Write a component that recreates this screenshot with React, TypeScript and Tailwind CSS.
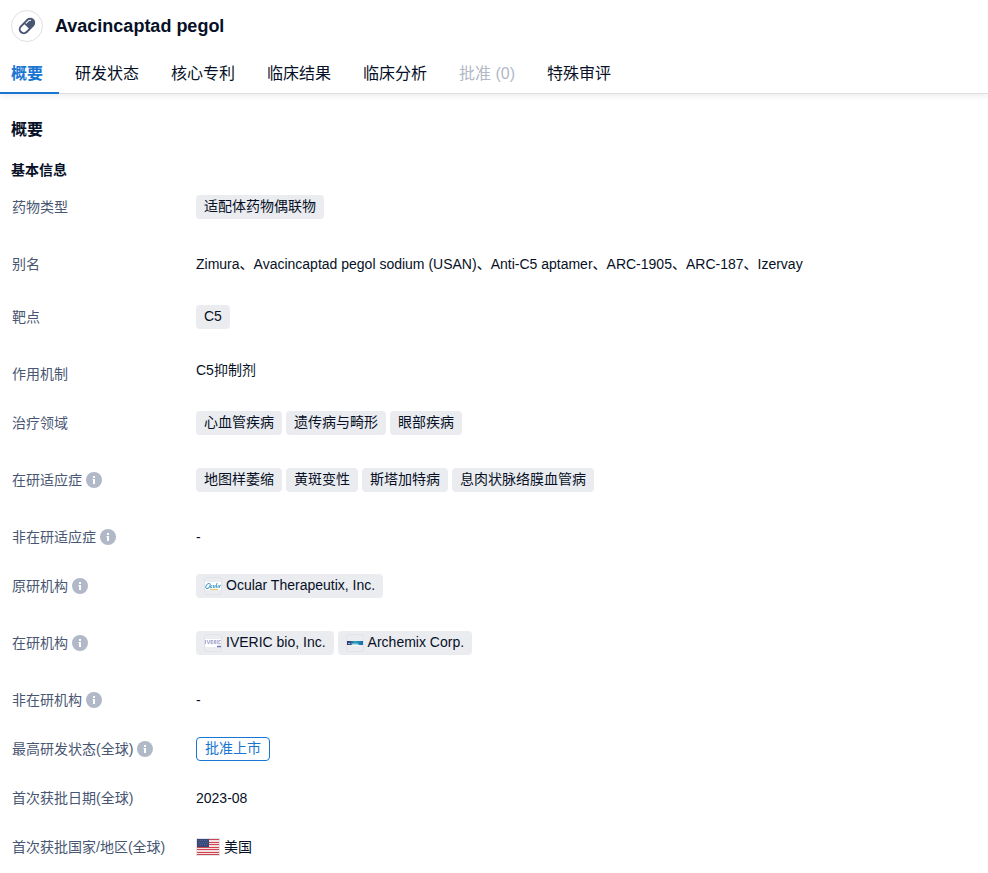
import type { ReactNode } from "react";

const tabs = [
  { label: "概要", state: "active" },
  { label: "研发状态" },
  { label: "核心专利" },
  { label: "临床结果" },
  { label: "临床分析" },
  { label: "批准 (0)", state: "disabled" },
  { label: "特殊审评" },
];

function PillIcon() {
  return (
    <svg viewBox="0 0 20 20" className="size-5" aria-hidden="true">
      <g transform="rotate(-45 10 10)">
        <rect x="0.500" y="5" width="19" height="10" rx="5" fill="#485672" />
        <path d="M9.500 6.900H5.500a3.100 3.100 0 0 0 0 6.200h4z" fill="#fff" />
        <path d="M11.500 7.400h3.200a2 2 0 0 1 1.800 1.100" fill="none" stroke="#fff" strokeWidth="1.100" strokeLinecap="round" />
      </g>
    </svg>
  );
}

function InfoIcon() {
  return (
    <svg viewBox="0 0 16 16" className="size-4 shrink-0" role="img" aria-label="说明">
      <circle cx="8" cy="8" r="8" fill="#b1b8c7" />
      <rect x="7" y="4" width="2" height="2" fill="#fff" />
      <path d="M6.500 7H9v5H7V8h-.5z" fill="#fff" />
    </svg>
  );
}

function OcularLogo() {
  return (
    <svg viewBox="0 0 16 16" className="size-4">
      <rect y="4" width="16" height="8" fill="#fff" />
      <g fill="none" stroke="#4a9cc8" strokeWidth="1">
        <ellipse cx="3" cy="8" rx="1.700" ry="2.800" transform="rotate(35 3 8)" />
        <path d="M7.200 7.500q-2.200 0-1.700 2.300l1.500-.3M8.500 7l-.3 2.500h1.500l.6-2.500M12 5l-.8 5M13.500 7.500l-.8 2.300M14.200 10l.5-2.500 1.300-.3" />
      </g>
      <path d="M5 11.500h8" stroke="#e8c66a" strokeWidth="1" />
    </svg>
  );
}

function IvericLogo() {
  return (
    <svg viewBox="0 0 16 16" className="size-4">
      <rect y="4" width="16" height="8" fill="#fff" />
      <path
        d="M.5 5v4M2 5l1.500 4L5 5M8 5.500H6v3.200h2M6 7h1.800M9.200 9V5.500h1.500v1.700H9.500L11 9M12.200 5v4M15.800 5.500h-2v3.200h2"
        fill="none"
        stroke="#9297c6"
        strokeWidth=".8"
      />
      <path d="M12 11.500h4" stroke="#6a78bd" strokeWidth="1.400" />
    </svg>
  );
}

function ArchemixLogo() {
  return (
    <svg viewBox="0 0 16 16" className="size-4">
      <defs>
        <linearGradient id="archemix">
          <stop offset="0" stopColor="#34256e" />
          <stop offset=".5" stopColor="#2aa3b4" />
          <stop offset="1" stopColor="#1769b0" />
        </linearGradient>
      </defs>
      <rect y="6" width="16" height="4" fill="url(#archemix)" />
      <path d="M1 8.500h2M4.500 9h6" stroke="#b9e2ec" strokeWidth=".8" />
      <path d="M5 10h7" stroke="#fff" strokeWidth="1" />
    </svg>
  );
}

function UsFlag() {
  return (
    <svg viewBox="0 0 24 18" className="h-[18px] w-6" role="img" aria-label="美国国旗">
      <rect width="24" height="18" fill="#e2e3e8" />
      <rect x="1" y="1" width="22" height="16" fill="#f6dfe1" />
      <path
        d="M1 1.500h22M1 4.500h22M1 6.500h22M1 9.500h22M1 11.500h22M1 14.500h22M1 16.500h22"
        stroke="#cf4450"
        strokeWidth="1"
      />
      <rect x="1" y="1" width="12" height="8" fill="#36477a" />
      <path d="M2 2.500h10M3 4.500h9M2 6.500h10" stroke="#58668f" strokeWidth="1" strokeDasharray="1 1" />
    </svg>
  );
}

function Chip({ logo, children }: { logo?: ReactNode; children: ReactNode }) {
  return (
    <span className="flex h-6 items-center gap-1 rounded bg-[#ebecf0] px-2">
      {logo && (
        <span className="flex size-[18px] items-center justify-center overflow-hidden rounded-[3px] border border-[#e1e3e8]">
          {logo}
        </span>
      )}
      <span className="pb-0.5">{children}</span>
    </span>
  );
}

function Chips({ items }: { items: string[] }) {
  return (
    <>
      {items.map((item) => (
        <Chip key={item}>{item}</Chip>
      ))}
    </>
  );
}

type RowProps = { label: string; info?: boolean; size?: "short" | "medium" | "tall"; children: ReactNode };

const rowSpace = { short: "pb-[25px]", medium: "pb-[29px]", tall: "pb-[33px]" };

function Row({ label, info, size = "tall", children }: RowProps) {
  return (
    <div className={`flex ${rowSpace[size]}`}>
      <dt className="flex h-6 w-[185px] shrink-0 items-center gap-1 pl-px text-[#485672]">
        {label}
        {info && <InfoIcon />}
      </dt>
      <dd className="flex min-h-6 min-w-0 flex-wrap items-center gap-1">{children}</dd>
    </div>
  );
}

export default function App() {
  return (
    <div className="bg-white font-['Liberation_Sans','Noto_Sans_CJK_SC',sans-serif] text-sm leading-[22px] text-[#061026]">
      <header className="shadow-[0_2px_6px_rgba(0,0,0,0.08)]">
        <div className="flex items-center gap-3 px-[11px] pt-[10px]">
          <span className="flex size-8 items-center justify-center rounded-full border border-[#dfe1e6]">
            <PillIcon />
          </span>
          <h1 className="text-lg font-bold">Avacincaptad pegol</h1>
        </div>
        <nav className="mt-3 flex h-10 border-b border-[#dcdee2] text-base">
          {tabs.map(({ label, state }) => (
            <button
              key={label}
              type="button"
              disabled={state === "disabled"}
              className={
                state === "active"
                  ? "-mb-px h-10 border-b-2 border-[#1876d2] pt-0.5 pr-4 pl-[11px] font-bold text-[#1876d2]"
                  : "h-10 px-4 disabled:text-[#b1b8c7]"
              }
            >
              {label}
            </button>
          ))}
        </nav>
      </header>

      <main className="px-[11px] pt-6">
        <h2 className="text-base leading-6 font-bold">概要</h2>
        <h3 className="mt-[17px] font-bold">基本信息</h3>
        <dl className="mt-[14px]">
          <Row label="药物类型">
            <Chips items={["适配体药物偶联物"]} />
          </Row>
          <Row label="别名" size="medium">
            Zimura、Avacincaptad pegol sodium (USAN)、Anti-C5 aptamer、ARC-1905、ARC-187、Izervay
          </Row>
          <Row label="靶点">
            <Chips items={["C5"]} />
          </Row>
          <Row label="作用机制" size="short">
            <span className="self-start leading-4">C5抑制剂</span>
          </Row>
          <Row label="治疗领域">
            <Chips items={["心血管疾病", "遗传病与畸形", "眼部疾病"]} />
          </Row>
          <Row label="在研适应症" info>
            <Chips items={["地图样萎缩", "黄斑变性", "斯塔加特病", "息肉状脉络膜血管病"]} />
          </Row>
          <Row label="非在研适应症" info size="short">
            -
          </Row>
          <Row label="原研机构" info>
            <Chip logo={<OcularLogo />}>Ocular Therapeutix, Inc.</Chip>
          </Row>
          <Row label="在研机构" info>
            <Chip logo={<IvericLogo />}>IVERIC bio, Inc.</Chip>
            <Chip logo={<ArchemixLogo />}>Archemix Corp.</Chip>
          </Row>
          <Row label="非在研机构" info size="short">
            -
          </Row>
          <Row label="最高研发状态(全球)" info size="short">
            <span className="flex h-6 items-center rounded border border-[#1876d2] px-2 text-[#1876d2]">
              <span className="pb-0.5">批准上市</span>
            </span>
          </Row>
          <Row label="首次获批日期(全球)" size="short">
            2023-08
          </Row>
          <Row label="首次获批国家/地区(全球)" size="short">
            <UsFlag />
            美国
          </Row>
        </dl>
      </main>
    </div>
  );
}
